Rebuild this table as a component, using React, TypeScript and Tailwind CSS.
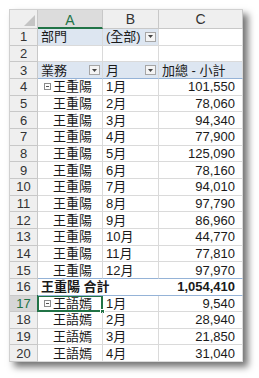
import React from 'react';

const font = { fontFamily: '"Liberation Sans", "Noto Sans CJK TC", sans-serif' };

type Row = {
  n: number;
  a?: React.ReactNode;
  b?: React.ReactNode;
  c?: React.ReactNode;
  kind?: 'filter' | 'head' | 'item' | 'first' | 'total' | 'blank';
};

const Drop = () => (
  <span className="ml-auto mr-[2px] flex h-[10px] w-[11px] items-center justify-center border border-[#a6a6a6] bg-[#f4f4f4]">
    <svg width="5" height="3" viewBox="0 0 5 3">
      <path d="M0 0h5L2.5 3z" fill="#444" />
    </svg>
  </span>
);

const Collapse = () => (
  <span className="mr-[2px] flex h-[7px] w-[7px] items-center justify-center border border-[#8c8c8c] bg-white">
    <span className="h-px w-[3px] bg-[#555]" />
  </span>
);

const months = ['1月', '2月', '3月', '4月', '5月', '6月', '7月', '8月', '9月', '10月', '11月', '12月'];
const wangVals = ['101,550', '78,060', '94,340', '77,900', '125,090', '78,160', '94,010', '97,790', '86,960', '44,770', '77,810', '97,970'];
const yuVals = ['9,540', '28,940', '21,850', '31,040'];

const rows: Row[] = [
  { n: 1, a: '部門', b: '(全部)', kind: 'filter' },
  { n: 2, kind: 'blank' },
  { n: 3, a: '業務', b: '月', c: '加總 - 小計', kind: 'head' },
  ...wangVals.map((v, i) => ({ n: 4 + i, a: '王重陽', b: months[i], c: v, kind: (i === 0 ? 'first' : 'item') as Row['kind'] })),
  { n: 16, a: '王重陽 合計', c: '1,054,410', kind: 'total' },
  ...yuVals.map((v, i) => ({ n: 17 + i, a: '王語嫣', b: months[i], c: v, kind: (i === 0 ? 'first' : 'item') as Row['kind'] })),
];

export default function App() {
  return (
    <div className="h-[378px] w-[259px] overflow-hidden bg-white pl-[9px] pt-[9px]" style={font}>
      <div className="w-[234px] border-l border-t border-[#d0d0d0] bg-white text-[13px] leading-none text-[#1a1a1a] shadow-[5px_5px_7px_rgba(0,0,0,0.55)]">
        {/* column headers */}
        <div className="flex h-[19px] bg-[#efefef] text-[14px] text-[#333]">
          <div className="relative w-[28px] border-b border-r border-[#c8c8c8]">
            <svg className="absolute bottom-[2px] right-[2px]" width="11" height="11" viewBox="0 0 11 11">
              <path d="M11 0V11H0z" fill="#c4c4c4" />
            </svg>
          </div>
          <div className="flex w-[65px] items-center justify-center border-b-2 border-r border-b-[#217346] border-r-[#c8c8c8] bg-[#dcdcdc] pt-[2px] text-[#217346]">A</div>
          <div className="flex w-[56px] items-center justify-center border-b border-r border-[#c8c8c8]">B</div>
          <div className="flex w-[84px] items-center justify-center border-b border-r border-[#c8c8c8]">C</div>
        </div>

        {rows.map((r) => {
          const sel = r.n === 17;
          const blue = r.kind === 'filter' || r.kind === 'head';
          const total = r.kind === 'total';
          const rowBorder =
            r.kind === 'head' || total || r.n === 15 ? 'border-b border-b-[#95b3d7]' : 'border-b border-b-[#dadada]';
          return (
            <div key={r.n} className="flex h-[16.67px]">
              <div
                className={`flex w-[28px] items-center justify-center border-b border-r border-[#c8c8c8] ${
                  sel ? 'bg-[#d6d6d6] text-[#217346] border-r-[#217346]' : 'bg-[#efefef] text-[#333]'
                }`}
              >
                {r.n}
              </div>
              <div
                className={`relative flex w-[65px] items-center whitespace-nowrap ${rowBorder} ${
                  total ? 'overflow-visible' : 'border-r border-r-[#dadada]'
                } ${blue ? 'bg-[#dde6f1]' : ''} ${
                  r.kind === 'item' ? 'pl-[15px]' : r.kind === 'first' ? 'pl-[6px]' : 'pl-[3px]'
                } ${total ? 'z-10 font-bold' : ''}`}
              >
                {r.kind === 'first' && <Collapse />}
                {r.a}
                {r.kind === 'head' && <Drop />}
                {sel && (
                  <span className="pointer-events-none absolute -bottom-px -left-px -right-px -top-px border-2 border-[#217346]">
                    <span className="absolute -bottom-[4px] -right-[4px] h-[5px] w-[5px] border border-white bg-[#217346]" />
                  </span>
                )}
              </div>
              <div
                className={`flex w-[56px] items-center pl-[3px] ${rowBorder} ${total ? '' : 'border-r border-r-[#dadada]'} ${
                  blue ? 'bg-[#dde6f1]' : ''
                }`}
              >
                {r.b}
                {(r.kind === 'filter' || r.kind === 'head') && <Drop />}
              </div>
              <div
                className={`flex w-[84px] items-center ${rowBorder} border-r border-r-[#dadada] ${
                  r.kind === 'head' ? 'justify-start bg-[#dde6f1] pl-[3px]' : 'justify-end pr-[7px]'
                } ${total ? 'font-bold' : ''}`}
              >
                {r.c}
              </div>
            </div>
          );
        })}
      </div>
    </div>
  );
}
